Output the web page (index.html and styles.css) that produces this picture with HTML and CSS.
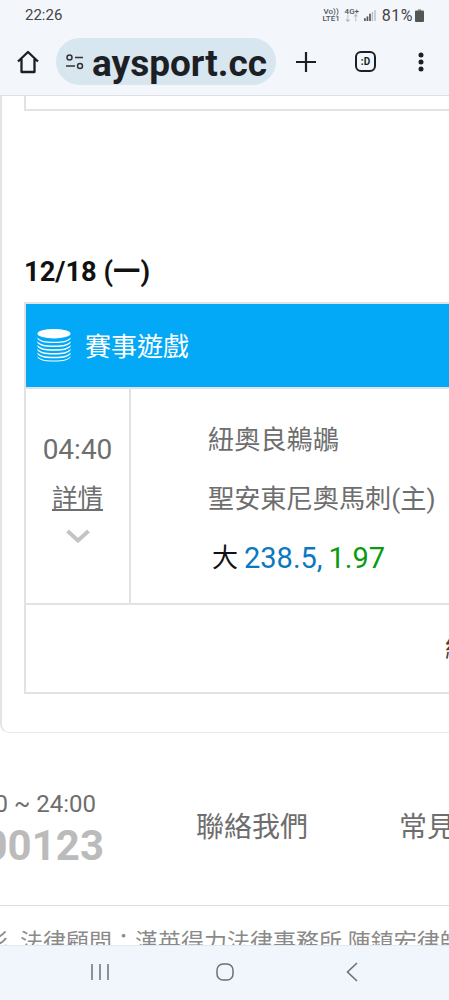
FILE: index.html
```html
<!DOCTYPE html>
<html lang="zh-Hant">
<head>
  <meta charset="UTF-8" />
  <meta name="viewport" content="width=device-width, initial-scale=1" />
  <title>aysport.cc</title>
  <link rel="stylesheet" href="styles.css">
</head>
<body>
  <div class="phone">

    <!-- status bar + browser toolbar -->
    <header class="top">
      <div class="status">
        <span class="clock">22:26</span>
        <div class="status-right">
          <span class="net"><span>Vo))</span><span>LTE1</span></span>
          <span class="net net-gray"><span class="net-dark">4G+</span><span class="arrows">↓↑</span></span>
          <svg class="signal" width="12" height="11" viewBox="0 0 14 12" preserveAspectRatio="none">
            <rect x="0" y="9" width="2" height="3" fill="#555"/>
            <rect x="3" y="7" width="2" height="5" fill="#555"/>
            <rect x="6" y="4" width="2" height="8" fill="#555"/>
            <rect x="9" y="2" width="1.6" height="10" fill="#bbb"/>
            <rect x="12" y="0" width="1.6" height="12" fill="#bbb"/>
          </svg>
          <span class="percent">81%</span>
          <svg width="9" height="13" viewBox="0 0 9 13">
            <rect x="3" y="0" width="3" height="2" fill="#aaa"/>
            <rect x="0" y="1.5" width="9" height="11.5" rx="1" fill="#555"/>
          </svg>
        </div>
      </div>
      <div class="toolbar">
        <svg class="home" width="24" height="24" viewBox="0 0 24 24" fill="none" stroke="#1c1f24" stroke-width="2.3" stroke-linejoin="round">
          <path d="M2 11.5 12 2l10 9.500M5.500 9v13h13V9"/>
        </svg>
        <div class="url">
          <svg width="20" height="18" viewBox="0 0 20 18" fill="none" stroke="#333" stroke-width="1.500">
            <circle cx="4.500" cy="4.500" r="2.500"/>
            <path d="M10 4.500h8M1 13h9"/>
            <circle cx="15" cy="13" r="2.500"/>
          </svg>
          <span class="url-text">aysport.cc</span>
        </div>
        <svg class="plus" width="20" height="20" viewBox="0 0 20 20" stroke="#1c1f24" stroke-width="2.200">
          <path d="M10 0v20M0 10h20"/>
        </svg>
        <span class="tabs">:D</span>
        <svg class="more" width="6" height="20" viewBox="0 0 6 20" fill="#1c1f24">
          <circle cx="3" cy="3" r="2.500"/>
          <circle cx="3" cy="10" r="2.500"/>
          <circle cx="3" cy="17" r="2.500"/>
        </svg>
      </div>
    </header>

    <main class="page">
      <section class="panel">
        <div class="prev-table"></div>

        <h2 class="date">12/18 (一)</h2>

        <div class="game-table">
          <div class="game-head">
            <svg width="34" height="34" viewBox="0 0 36 36">
              <ellipse cx="18" cy="6" rx="17.500" ry="5" fill="#fff"/>
              <path d="M.5 10c2 3 7 4.500 17.500 4.500S33.500 13 35.500 10v1.500C33.500 14.500 28.500 16 18 16S2.500 14.500.5 11.500z" fill="#fff"/>
              <path d="M.5 14c2 3 7 4.500 17.500 4.500S33.500 17 35.500 14v1.500C33.500 18.500 28.500 20 18 20S2.500 18.500.5 15.500z" fill="#fff"/>
              <path d="M.5 18c2 3 7 4.500 17.500 4.500S33.500 21 35.500 18v1.500C33.500 22.500 28.500 24 18 24S2.500 22.500.5 19.500z" fill="#fff"/>
              <path d="M.5 22c2 3 7 4.500 17.500 4.500S33.500 25 35.500 22v1.500C33.500 26.500 28.500 28 18 28S2.500 26.500.5 23.500z" fill="#fff"/>
              <path d="M.5 26c2 3 7 4.500 17.500 4.500S33.500 29 35.500 26v1.500C33.500 30.500 28.500 32 18 32S2.500 30.500.5 27.500z" fill="#fff"/>
              <path d="M.5 30c2 3 7 4.500 17.500 4.500S33.500 33 35.500 30v1C33.500 34 28.500 35.500 18 35.500S2.500 34 .5 31z" fill="#fff"/>
            </svg>
            <span class="game-title">賽事遊戲</span>
          </div>
          <div class="game-row">
            <div class="time-cell">
              <span class="time">04:40</span>
              <a class="detail" href="#">詳情</a>
              <svg class="chevron" width="24" height="14" viewBox="0 0 24 14" fill="none" stroke="#c4c4c4" stroke-width="4">
                <path d="M1.500 2 12 11.500 22.500 2"/>
              </svg>
            </div>
            <div class="match-cell">
              <p class="team">紐奧良鵜鶘</p>
              <p class="team">聖安東尼奧馬刺(主)</p>
              <p class="odds"><span class="odds-side">大</span><span class="odds-line">238.5,</span><span class="odds-price">1.97</span></p>
            </div>
          </div>
          <div class="game-foot">結果</div>
        </div>
      </section>

      <footer class="site-foot">
        <div class="foot-links">
          <div class="service">
            <span class="hours">08:00 ~ 24:00</span>
            <span class="hotline">0800000123</span>
          </div>
          <a class="foot-link link-contact" href="#">聯絡我們</a>
          <a class="foot-link" href="#">常見問題</a>
        </div>
        <p class="legal"><span class="legal-lead">彩</span>法律顧問：漢英得力法律事務所 陳鎮宏律師</p>
      </footer>
    </main>

    <!-- android nav -->
    <nav class="nav-bar">
      <svg width="18" height="18" viewBox="0 0 18 18" stroke="#6b7077" stroke-width="1.500">
        <path d="M1 1v16M9 1v16M17 1v16"/>
      </svg>
      <svg width="18" height="18" viewBox="0 0 18 18" fill="none" stroke="#6b7077" stroke-width="1.500">
        <rect x="1" y="1" width="16" height="16" rx="6"/>
      </svg>
      <svg class="nav-back" width="12" height="20" viewBox="0 0 12 20" fill="none" stroke="#6b7077" stroke-width="1.600">
        <path d="M11 1 1.500 10 11 19"/>
      </svg>
    </nav>
  </div>
</body>
</html>
```

FILE: styles.css
```css
* {
  box-sizing: border-box;
}

body {
  margin: 0;
  background-color: #fff;
  font-family: Roboto, "Noto Sans CJK TC", sans-serif;
  color: #6e6e6e;
}

.phone {
  width: 449px;
  height: 1000px;
  display: flex;
  flex-direction: column;
  overflow: hidden;
}

/* top bars */
.top {
  height: 96px;
  flex-shrink: 0;
  background-color: #f3f7fc;
  border-bottom: 1px solid #dde1e6;
}

.status {
  height: 30px;
  padding: 0 25px;
  display: flex;
  align-items: center;
  justify-content: space-between;
}

.clock {
  font-size: 15px;
  color: #444;
}

.status-right {
  display: flex;
  align-items: center;
  gap: 4px;
}

.net {
  display: flex;
  flex-direction: column;
  align-items: center;
  font-size: 8px;
  line-height: 7px;
  font-weight: 500;
  color: #555;
}

.arrows {
  color: #aaa;
}

.percent {
  font-size: 16px;
  letter-spacing: 0.5px;
  color: #444;
  margin-left: 2px;
  margin-right: -2px;
}

.toolbar {
  height: 47px;
  margin-top: 8px;
  padding-left: 16px;
  display: flex;
  align-items: center;
}

.url {
  width: 220px;
  height: 47px;
  margin-left: 16px;
  padding-left: 9px;
  background-color: #d8e6f0;
  border-radius: 24px;
  display: flex;
  align-items: center;
  gap: 7px;
}

.url-text {
  font-size: 37px;
  line-height: 47px;
  padding-top: 4px;
  font-weight: 700;
  color: #1c1f24;
}

.plus {
  margin-left: 20px;
}

.tabs {
  width: 21px;
  height: 21px;
  margin-left: 39px;
  border: 2.200px solid #1c1f24;
  border-radius: 6px;
  display: flex;
  align-items: center;
  justify-content: center;
  font-size: 10px;
  font-weight: 700;
  color: #1c1f24;
}

.more {
  margin-left: 42px;
}

/* page content */
.page {
  flex: 1;
  min-height: 0;
  overflow: hidden;
}

.panel {
  height: 637px;
  padding-left: 22px;
  border-left: 2px solid #e4e4e4;
  border-bottom: 1px solid #e8e8e8;
  border-bottom-left-radius: 9px;
}

.prev-table {
  height: 15px;
  width: 600px;
  border-left: 2px solid #e2e2e2;
  border-bottom: 2px solid #e2e2e2;
}

.date {
  margin: 144px 0 13px;
  height: 34px;
  line-height: 34px;
  font-size: 27.300px;
  font-weight: 700;
  color: #111;
}

.game-table {
  width: 894px;
  border: 2px solid #e2e2e2;
}

.game-head {
  height: 83px;
  padding-left: 11px;
  padding-bottom: 2px;
  background-color: #03a9f6;
  display: flex;
  align-items: center;
  gap: 14px;
}

.game-title {
  font-size: 26px;
  color: #fff;
}

.game-row {
  height: 218px;
  display: grid;
  grid-template-columns: 105px 1fr;
  border-top: 2px solid #e2e2e2;
  border-bottom: 2px solid #e2e2e2;
}

.time-cell {
  padding-top: 43px;
  border-right: 2px solid #e2e2e2;
  display: flex;
  flex-direction: column;
  align-items: center;
}

.time {
  height: 36px;
  line-height: 36px;
  font-size: 28px;
}

.detail {
  margin-top: 12px;
  height: 36px;
  line-height: 36px;
  font-size: 25.500px;
  color: inherit;
  text-decoration: underline;
}

.chevron {
  margin-top: 13px;
}

.match-cell {
  padding: 33px 0 0 77px;
}

.team {
  margin: 0 0 22px;
  height: 37px;
  line-height: 37px;
  font-size: 26.200px;
  color: inherit;
}

.odds {
  margin: 0;
  padding-left: 4px;
  height: 37px;
  line-height: 37px;
  font-size: 29px;
  display: flex;
  align-items: center;
}

.odds-side {
  font-size: 26px;
  color: #111;
  margin-right: 6px;
}

.odds-line {
  color: #0b78c0;
  margin-right: 6px;
}

.odds-price {
  color: #0a9a10;
}

.game-foot {
  height: 87px;
  line-height: 87px;
  text-align: center;
  font-size: 26px;
  color: #444;
}

/* footer */
.site-foot {
  padding-top: 51px;
}

.foot-links {
  height: 122px;
  border-bottom: 1px solid #dcdcdc;
  display: flex;
  overflow: hidden;
}

.service {
  width: 104px;
  flex-shrink: 0;
  display: flex;
  flex-direction: column;
  align-items: flex-end;
  white-space: nowrap;
  overflow: hidden;
}

.hours {
  height: 40px;
  line-height: 40px;
  font-size: 24px;
  padding-right: 8px;
}

.hotline {
  height: 44px;
  line-height: 44px;
  font-size: 42px;
  font-weight: 700;
  color: #bbb;
}

.foot-link {
  flex-shrink: 0;
  margin-top: 24px;
  height: 40px;
  line-height: 40px;
  font-size: 28px;
  color: inherit;
  text-decoration: none;
}

.link-contact {
  margin-left: 92px;
  margin-right: 91px;
}

.legal {
  margin: 19px 0 0 -15px;
  font-size: 23px;
  line-height: 36px;
  white-space: nowrap;
  color: #8a8a8a;
}

.legal-lead {
  margin-right: 12px;
}

.nav-bar {
  height: 55px;
  flex-shrink: 0;
  padding-bottom: 3px;
  background-color: #f1f5fc;
  border-top: 1px solid #e4e7ec;
  display: flex;
  align-items: center;
  justify-content: center;
  gap: 107px;
}

.nav-back {
  margin-left: 5px;
}
```
